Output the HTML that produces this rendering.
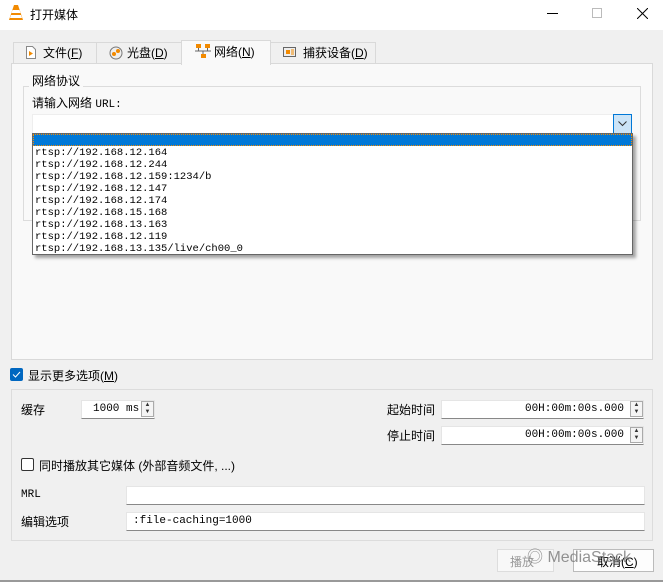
<!DOCTYPE html>
<html><head><meta charset="utf-8"><style>
*{box-sizing:border-box;margin:0;padding:0}
body{width:663px;height:582px;background:#f0f0f0;font-family:"Liberation Sans","Noto Sans CJK SC",sans-serif;font-size:12px;color:#000;position:relative;overflow:hidden}
.a{position:absolute}
.m{font-family:"Liberation Mono","Noto Sans CJK SC",monospace;font-size:10px}
.in{position:absolute;background:#fff;border:1px solid #e5e5e5;border-bottom:1px solid #888}
.sp{position:absolute;width:13px;border:1px solid #aaa;background:#f4f4f4;font-size:6px;line-height:7px;text-align:center;color:#333}
.tab{position:absolute;top:42px;height:22px;border:1px solid #d9d9d9;border-bottom:none;background:#f0f0f0;line-height:20px;padding-left:16px;font-size:12px}
</style></head><body>
<div class="a" style="left:0;top:0;width:663px;height:30px;background:#fff"></div>
<svg class="a" style="left:8px;top:4px" width="16" height="18"><path d="M6 1h4l5 15H1z" fill="#f28a00"/><path d="M4.5 6h7l1 3h-9zM3 11h10l1 3H2z" fill="#fff"/></svg>
<div class="a" style="left:30px;top:6px;font-size:12px">打开媒体</div>
<div class="a" style="left:547px;top:13px;width:11px;height:1px;background:#000"></div>
<div class="a" style="left:592px;top:8px;width:10px;height:10px;border:1px solid #bbb"></div>
<svg class="a" style="left:637px;top:8px" width="11" height="11"><path d="M0 0L11 11M11 0L0 11" stroke="#000"/></svg>

<div class="tab" style="left:13px;width:84px;padding-left:29px">文件(<u>F</u>)</div>
<svg class="a" style="left:26px;top:46px" width="10" height="13"><path d="M.5.5h6l3 3v9h-9z" fill="#fff" stroke="#888"/><path d="M3 5l4 2.5L3 10z" fill="#f28a00"/></svg>
<div class="tab" style="left:96px;width:86px;padding-left:30px">光盘(<u>D</u>)</div>
<svg class="a" style="left:109px;top:46px" width="14" height="14"><circle cx="7" cy="7" r="6" fill="#eee" stroke="#777"/><circle cx="5" cy="8" r="2" fill="#f28a00"/><circle cx="9" cy="5" r="2" fill="#f28a00"/></svg>
<div class="tab" style="left:181px;top:40px;height:25px;width:90px;background:#f9f9f9;padding-left:32px;line-height:23px;z-index:2">网络(<u>N</u>)</div>
<svg class="a" style="left:195px;top:43px;z-index:3" width="16" height="16"><rect x="1" y="1" width="5" height="4" fill="#f28a00"/><rect x="10" y="1" width="5" height="4" fill="#f28a00"/><rect x="6" y="11" width="5" height="4" fill="#f28a00"/><path d="M3.5 5v3h9V5M8 8v3M0 8h16" stroke="#666" fill="none"/></svg>
<div class="tab" style="left:270px;width:106px;padding-left:32px">捕获设备(<u>D</u>)</div>
<svg class="a" style="left:283px;top:47px" width="14" height="11"><rect x=".5" y=".5" width="12" height="9" fill="#eee" stroke="#666"/><rect x="3" y="3" width="4" height="4" fill="#f28a00"/><path d="M8 3h3M8 5h3M8 7h3" stroke="#f28a00"/></svg>

<div class="a" style="left:11px;top:63px;width:642px;height:297px;background:#f9f9f9;border:1px solid #d9d9d9"></div>
<div class="a" style="left:23px;top:86px;width:618px;height:135px;border:1px solid #dcdcdc"></div>
<div class="a" style="left:29px;top:72px;background:#f9f9f9;padding:0 3px">网络协议</div>
<div class="a" style="left:32px;top:94px">请输入网络 <span class="m" style="font-size:11px">URL:</span></div>
<div class="a" style="left:32px;top:114px;width:600px;height:20px;background:#fff;border:1px solid #eee"></div>
<div class="a" style="left:613px;top:114px;width:19px;height:20px;background:#cce4f7;border:1px solid #0078d7"></div>
<svg class="a" style="left:618px;top:121px" width="9" height="6"><path d="M.5.5l4 4 4-4" stroke="#333" fill="none"/></svg>

<div class="a" style="left:32px;top:133px;width:601px;height:122px;background:#fff;border:1px solid #666;box-shadow:3px 3px 3px rgba(0,0,0,.35)"></div>
<div class="a" style="left:33px;top:134px;width:599px;height:12px;background:#0078d7;border:1px dotted #f28a00"></div>
<div class="a m" style="left:35px;top:147px;line-height:12px;font-size:10.5px">rtsp://192.168.12.164<br>rtsp://192.168.12.244<br>rtsp://192.168.12.159:1234/b<br>rtsp://192.168.12.147<br>rtsp://192.168.12.174<br>rtsp://192.168.15.168<br>rtsp://192.168.13.163<br>rtsp://192.168.12.119<br>rtsp://192.168.13.135/live/ch00_0</div>

<div class="a" style="left:10px;top:368px;width:13px;height:13px;background:#0067c0;border-radius:2px"></div>
<svg class="a" style="left:12px;top:371px" width="9" height="7"><path d="M1 3.5l2.5 2.5L8 1" stroke="#fff" fill="none"/></svg>
<div class="a" style="left:28px;top:367px">显示更多选项(<u>M</u>)</div>

<div class="a" style="left:11px;top:389px;width:642px;height:152px;border:1px solid #dcdcdc"></div>
<div class="a" style="left:21px;top:401px">缓存</div>
<div class="in" style="left:81px;top:400px;width:74px;height:19px"></div>
<div class="a m" style="left:93px;top:403px;font-size:11px">1000 ms</div>
<div class="sp" style="left:141px;top:401px;height:16px">▲<br>▼</div>
<div class="a" style="left:387px;top:401px">起始时间</div>
<div class="in" style="left:441px;top:400px;width:203px;height:19px"></div>
<div class="a m" style="right:39px;top:403px;font-size:11px">00H:00m:00s.000</div>
<div class="sp" style="left:630px;top:401px;height:16px">▲<br>▼</div>
<div class="a" style="left:387px;top:427px">停止时间</div>
<div class="in" style="left:441px;top:426px;width:203px;height:19px"></div>
<div class="a m" style="right:39px;top:429px;font-size:11px">00H:00m:00s.000</div>
<div class="sp" style="left:630px;top:427px;height:16px">▲<br>▼</div>

<div class="a" style="left:21px;top:458px;width:13px;height:13px;border:1px solid #333;border-radius:2px;background:#fff"></div>
<div class="a" style="left:39px;top:457px">同时播放其它媒体 (外部音频文件, ...)</div>
<div class="a m" style="left:21px;top:489px;font-size:11px">MRL</div>
<div class="in" style="left:126px;top:486px;width:519px;height:19px"></div>
<div class="a" style="left:21px;top:513px">编辑选项</div>
<div class="in" style="left:126px;top:512px;width:519px;height:19px"></div>
<div class="a m" style="left:133px;top:515px;font-size:11px">:file-caching=1000</div>

<div class="a" style="left:497px;top:549px;width:57px;height:23px;border:1px solid #ddd;background:#f8f8f8;color:#999;padding:3px 0 0 12px">播放</div>
<div class="a" style="left:573px;top:549px;width:81px;height:23px;border:1px solid #bbb;background:#fdfdfd;padding:3px 0 0 23px">取消(<u>C</u>)</div>
<div class="a" style="left:527px;top:543px;color:rgba(120,120,120,.8);font-size:16px">◎ MediaStack</div>
<div class="a" style="left:0;top:580px;width:663px;height:2px;background:#999"></div>
</body></html>
